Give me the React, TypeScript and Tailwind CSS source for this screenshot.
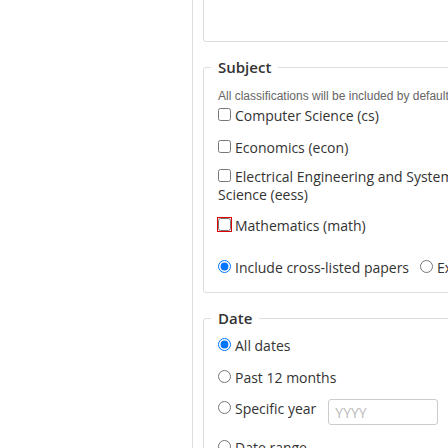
const Check = ({ label, flagged, className }: { label: string; flagged?: boolean; className?: string }) => {
  return (
    <div className={`leading-[18px] ${className ?? ''}`}>
      <label>
        <input
          type="checkbox"
          className={`m-0 mr-[4px] w-[13px] h-[13px] ${flagged ? 'outline outline-1 outline-offset-0 outline-[#e00000]' : ''}`}
        />
        {label}
      </label>
    </div>
  );
};

const Radio = ({ label, name, checked }: { label: string; name: string; checked?: boolean }) => {
  return (
    <label className="whitespace-nowrap">
      <input type="radio" name={name} defaultChecked={checked} className="m-0 mr-[4px] w-[13px] h-[13px]" />
      {label}
    </label>
  );
};

export default function App() {
  return (
    <div className="w-[448px] h-[448px] overflow-hidden bg-white">
      <div className="flex w-[580px] min-h-[448px] text-[14px] text-[#333] font-['Open_Sans',sans-serif]">
        <div className="w-[192px] shrink-0" />

        <div className="w-[388px] shrink-0 border-l border-[#ddd] pl-[10px]">
          {/* tail of the search-terms box, scrolled off the top */}
          <div className="h-[42px] w-[300px] border-x border-b border-[#ddd] rounded-b-[3px]" />

          <fieldset className="mt-[15px] w-[300px] min-w-0 border border-[#ddd] rounded-[3px] pl-[7px] pr-[14px] pb-[15px]">
            <legend className="px-[7px] text-[15px] leading-[20px] font-semibold text-[#333]">Subject</legend>
            <div className="pl-[7px]">
              <p className="mt-[11px] text-[12px] leading-[16px] text-[#666] whitespace-nowrap font-['Liberation_Sans',Arial,sans-serif]">
                All classifications will be included by default.
              </p>
              <Check label="Computer Science (cs)" className="mt-[3px]" />
              <Check label="Economics (econ)" className="mt-[14px]" />
              <Check label="Electrical Engineering and Systems Science (eess)" className="mt-[11px]" />
              <Check label="Mathematics (math)" className="mt-[13px]" flagged />

              <div className="mt-[24px] flex gap-[11px] leading-[18px]">
                <Radio label="Include cross-listed papers" name="cross" checked />
                <Radio label="Exclude cross-listed papers" name="cross" />
              </div>
            </div>
          </fieldset>

          <fieldset className="mt-[15px] w-[300px] min-w-0 border border-[#ddd] rounded-[3px] pl-[7px] pr-[14px] pb-[15px]">
            <legend className="px-[7px] text-[15px] leading-[20px] font-semibold text-[#333]">Date</legend>
            <div className="pl-[7px] leading-[18px]">
              <div className="mt-[9px]">
                <Radio label="All dates" name="date" checked />
              </div>
              <div className="mt-[14px]">
                <Radio label="Past 12 months" name="date" />
              </div>
              <div className="mt-[13px] flex items-start">
                <Radio label="Specific year" name="date" />
                <input
                  type="text"
                  placeholder="YYYY"
                  className="ml-[12px] -mt-[1px] w-[110px] h-[26px] border border-[#ccc] rounded-[3px] px-[6px] text-[14px] placeholder:text-[#bbb]"
                />
              </div>
              <div className="mt-[14px]">
                <Radio label="Date range" name="date" />
              </div>
            </div>
          </fieldset>
        </div>
      </div>
    </div>
  );
}
